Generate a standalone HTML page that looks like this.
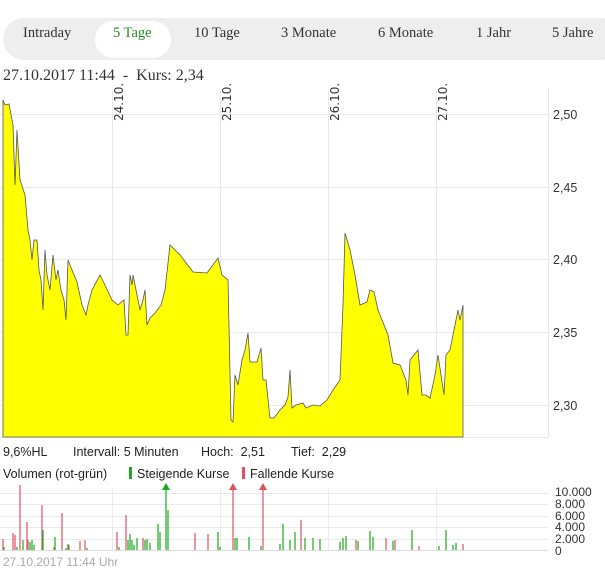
<!DOCTYPE html>
<html><head><meta charset="utf-8"><style>
body{margin:0;width:605px;height:569px;background:#fff;overflow:hidden;font-family:"Liberation Sans",sans-serif;}
.bar{position:absolute;left:3px;top:18px;width:620px;height:42px;background:#eee;border-radius:21px;}
.tab{position:absolute;height:20px;line-height:20px;font-family:"Liberation Serif",serif;font-size:14.5px;color:#333;}
.act{position:absolute;left:95px;top:21px;width:76px;height:37px;background:#fff;border-radius:19px;}
</style></head><body>
<div class="bar"></div><div class="act"></div>
<div class="tab" style="left:23px;top:23px">Intraday</div>
<div class="tab" style="left:113px;top:23px;color:#2a8a2a">5 Tage</div>
<div class="tab" style="left:194px;top:23px">10 Tage</div>
<div class="tab" style="left:281px;top:23px">3 Monate</div>
<div class="tab" style="left:378px;top:23px">6 Monate</div>
<div class="tab" style="left:476px;top:23px">1 Jahr</div>
<div class="tab" style="left:552px;top:23px">5 Jahre</div>
<svg width="605" height="569" style="position:absolute;left:0;top:0" font-family="Liberation Sans, sans-serif">
<text x="3" y="80" font-family="Liberation Serif, serif" font-size="16" fill="#333">27.10.2017 11:44&#160;&#160;-&#160;&#160;Kurs: 2,34</text>
<g stroke="#e8e8e8" stroke-width="1">
<line x1="0" x2="548" y1="114.5" y2="114.5"/><line x1="0" x2="548" y1="187.5" y2="187.5"/><line x1="0" x2="548" y1="259.5" y2="259.5"/><line x1="0" x2="548" y1="332.5" y2="332.5"/><line x1="0" x2="548" y1="405.5" y2="405.5"/>
<line x1="112.5" x2="112.5" y1="90" y2="437"/><line x1="220.5" x2="220.5" y1="90" y2="437"/><line x1="328.5" x2="328.5" y1="90" y2="437"/><line x1="436.5" x2="436.5" y1="90" y2="437"/>
<line x1="548.5" x2="548.5" y1="88" y2="437"/><line x1="0" x2="548" y1="437.5" y2="437.5"/>
</g>
<polygon fill="#ffff00" stroke="#555" stroke-width="0.8" points="3,437 3,100 5,105 9,104 13,125 15,185 17,130 20,180 25,195 28,230 30,240 32,260 34,240 37,240 39,270 41,280 43,310 45,250 47,275 50,290 53,255 56,280 58,270 61,290 64,300 66,320 68,260 72,270 77,282 82,305 86,315 88,305 92,290 100,275 105,285 112,300 118,305 124,300 126,335 128,335 130,275 132,285 133,275 136,290 140,310 143,300 145,290 147,325 150,318 155,313 161,305 165,290 170,245 180,255 193,272 207,273 218,258 222,275 228,280 231,420 233,422 235,375 238,385 242,360 245,350 248,333 250,362 257,362 261,348 263,380 266,380 270,418 274,418 280,410 285,405 288,397 290,370 292,408 296,405 303,403 306,408 313,405 320,406 327,400 333,390 340,380 343,305 345,233 350,250 355,275 360,305 367,302 370,290 374,292 378,310 382,320 388,335 393,363 400,365 406,380 408,395 410,360 414,355 418,350 422,395 426,395 430,398 435,375 438,355 441,375 444,395 446,355 450,350 454,330 458,310 460,320 463,305 463,437"/>
<g font-size="12.5" fill="#333">
<text x="553" y="119">2,50</text><text x="553" y="192">2,45</text><text x="553" y="264">2,40</text><text x="553" y="337">2,35</text><text x="553" y="410">2,30</text>
</g>
<g font-size="12" fill="#333" font-family="DejaVu Sans, sans-serif">
<text transform="translate(123,121) rotate(-90)">24.10.</text>
<text transform="translate(231,121) rotate(-90)">25.10.</text>
<text transform="translate(339,121) rotate(-90)">26.10.</text>
<text transform="translate(447,121) rotate(-90)">27.10.</text>
</g>
<g font-size="12.5" fill="#222">
<text x="3" y="456">9,6%HL</text><text x="73" y="456">Intervall: 5 Minuten</text><text x="201" y="456">Hoch:&#160; 2,51</text><text x="291" y="456">Tief:&#160; 2,29</text>
<text x="3" y="478">Volumen (rot-grün)</text>
<rect x="129" y="467" width="3" height="12" fill="#1aab1a"/><text x="137" y="478">Steigende Kurse</text>
<rect x="242" y="467" width="3" height="12" fill="#e05060"/><text x="250" y="478">Fallende Kurse</text>
</g>
<g stroke="#eaeaea"><line x1="0" x2="548" y1="493.5" y2="493.5"/><line x1="0" x2="548" y1="504.5" y2="504.5"/><line x1="0" x2="548" y1="516.5" y2="516.5"/><line x1="0" x2="548" y1="527.5" y2="527.5"/><line x1="0" x2="548" y1="539.5" y2="539.5"/>
<line x1="112.5" x2="112.5" y1="488" y2="550"/><line x1="220.5" x2="220.5" y1="488" y2="550"/><line x1="328.5" x2="328.5" y1="488" y2="550"/><line x1="436.5" x2="436.5" y1="488" y2="550"/></g>
<line x1="0" x2="548" y1="550.5" y2="550.5" stroke="#ddd"/>
<g stroke-width="1.2">
<g stroke="#e05060">
<line x1="3" x2="3" y1="539" y2="550"/><line x1="13" x2="13" y1="533" y2="550"/><line x1="15" x2="15" y1="535" y2="550"/><line x1="20" x2="20" y1="485" y2="550"/><line x1="27" x2="27" y1="522" y2="550"/><line x1="28" x2="28" y1="540" y2="550"/><line x1="42" x2="42" y1="505" y2="550"/><line x1="54" x2="54" y1="547" y2="550"/><line x1="62" x2="62" y1="513" y2="550"/><line x1="69" x2="69" y1="545" y2="550"/><line x1="80" x2="80" y1="541" y2="550"/><line x1="85" x2="85" y1="540" y2="550"/><line x1="117" x2="117" y1="532" y2="550"/><line x1="126" x2="126" y1="515" y2="550"/><line x1="143" x2="143" y1="538" y2="550"/><line x1="195" x2="195" y1="533" y2="550"/><line x1="208" x2="208" y1="534" y2="550"/><line x1="233" x2="233" y1="485" y2="550"/><line x1="263" x2="263" y1="485" y2="550"/><line x1="301" x2="301" y1="520" y2="550"/><line x1="356" x2="356" y1="540" y2="550"/><line x1="386" x2="386" y1="538" y2="550"/><line x1="395" x2="395" y1="540" y2="550"/><line x1="419" x2="419" y1="546" y2="550"/><line x1="463" x2="463" y1="544" y2="550"/>
</g>
<g stroke="#1aab1a">
<line x1="4" x2="4" y1="547" y2="550"/><line x1="17" x2="17" y1="547" y2="550"/><line x1="23" x2="23" y1="540" y2="550"/><line x1="30" x2="30" y1="542" y2="550"/><line x1="32" x2="32" y1="540" y2="550"/><line x1="34" x2="34" y1="545" y2="550"/><line x1="43" x2="43" y1="530" y2="550"/><line x1="55" x2="55" y1="537" y2="550"/><line x1="66" x2="66" y1="548" y2="550"/><line x1="68" x2="68" y1="544" y2="550"/><line x1="87" x2="87" y1="548" y2="550"/><line x1="119" x2="119" y1="547" y2="550"/><line x1="128" x2="128" y1="540" y2="550"/><line x1="130" x2="130" y1="534" y2="550"/><line x1="132" x2="132" y1="540" y2="550"/><line x1="134" x2="134" y1="545" y2="550"/><line x1="137" x2="137" y1="538" y2="550"/><line x1="145" x2="145" y1="540" y2="550"/><line x1="147" x2="147" y1="539" y2="550"/><line x1="150" x2="150" y1="543" y2="550"/><line x1="158" x2="158" y1="524" y2="550"/><line x1="160" x2="160" y1="532" y2="550"/><line x1="166" x2="166" y1="485" y2="550"/><line x1="168" x2="168" y1="510" y2="550"/><line x1="218" x2="218" y1="532" y2="550"/><line x1="220" x2="220" y1="547" y2="550"/><line x1="235" x2="235" y1="538" y2="550"/><line x1="237" x2="237" y1="538" y2="550"/><line x1="249" x2="249" y1="537" y2="550"/><line x1="261" x2="261" y1="546" y2="550"/><line x1="280" x2="280" y1="544" y2="550"/><line x1="283" x2="283" y1="524" y2="550"/><line x1="290" x2="290" y1="540" y2="550"/><line x1="295" x2="295" y1="532" y2="550"/><line x1="305" x2="305" y1="538" y2="550"/><line x1="313" x2="313" y1="538" y2="550"/><line x1="320" x2="320" y1="539" y2="550"/><line x1="340" x2="340" y1="542" y2="550"/><line x1="343" x2="343" y1="538" y2="550"/><line x1="346" x2="346" y1="536" y2="550"/><line x1="358" x2="358" y1="541" y2="550"/><line x1="370" x2="370" y1="531" y2="550"/><line x1="373" x2="373" y1="537" y2="550"/><line x1="393" x2="393" y1="541" y2="550"/><line x1="412" x2="412" y1="530" y2="550"/><line x1="439" x2="439" y1="546" y2="550"/><line x1="446" x2="446" y1="530" y2="550"/><line x1="453" x2="453" y1="545" y2="550"/><line x1="456" x2="456" y1="543" y2="550"/>
</g></g>
<polygon points="166,483 162,490 170,490" fill="#1aab1a"/>
<polygon points="233,483 229,490 237,490" fill="#e05060"/>
<polygon points="263,483 259,490 267,490" fill="#e05060"/>
<g font-size="12" fill="#333">
<text x="555" y="496">10.000</text><text x="555" y="508">8.000</text><text x="555" y="520">6.000</text><text x="555" y="531">4.000</text><text x="555" y="543">2.000</text><text x="555" y="555">0</text>
</g>
<text x="3" y="566" font-size="12" fill="#aaa">27.10.2017 11:44 Uhr</text>
</svg>
</body></html>
